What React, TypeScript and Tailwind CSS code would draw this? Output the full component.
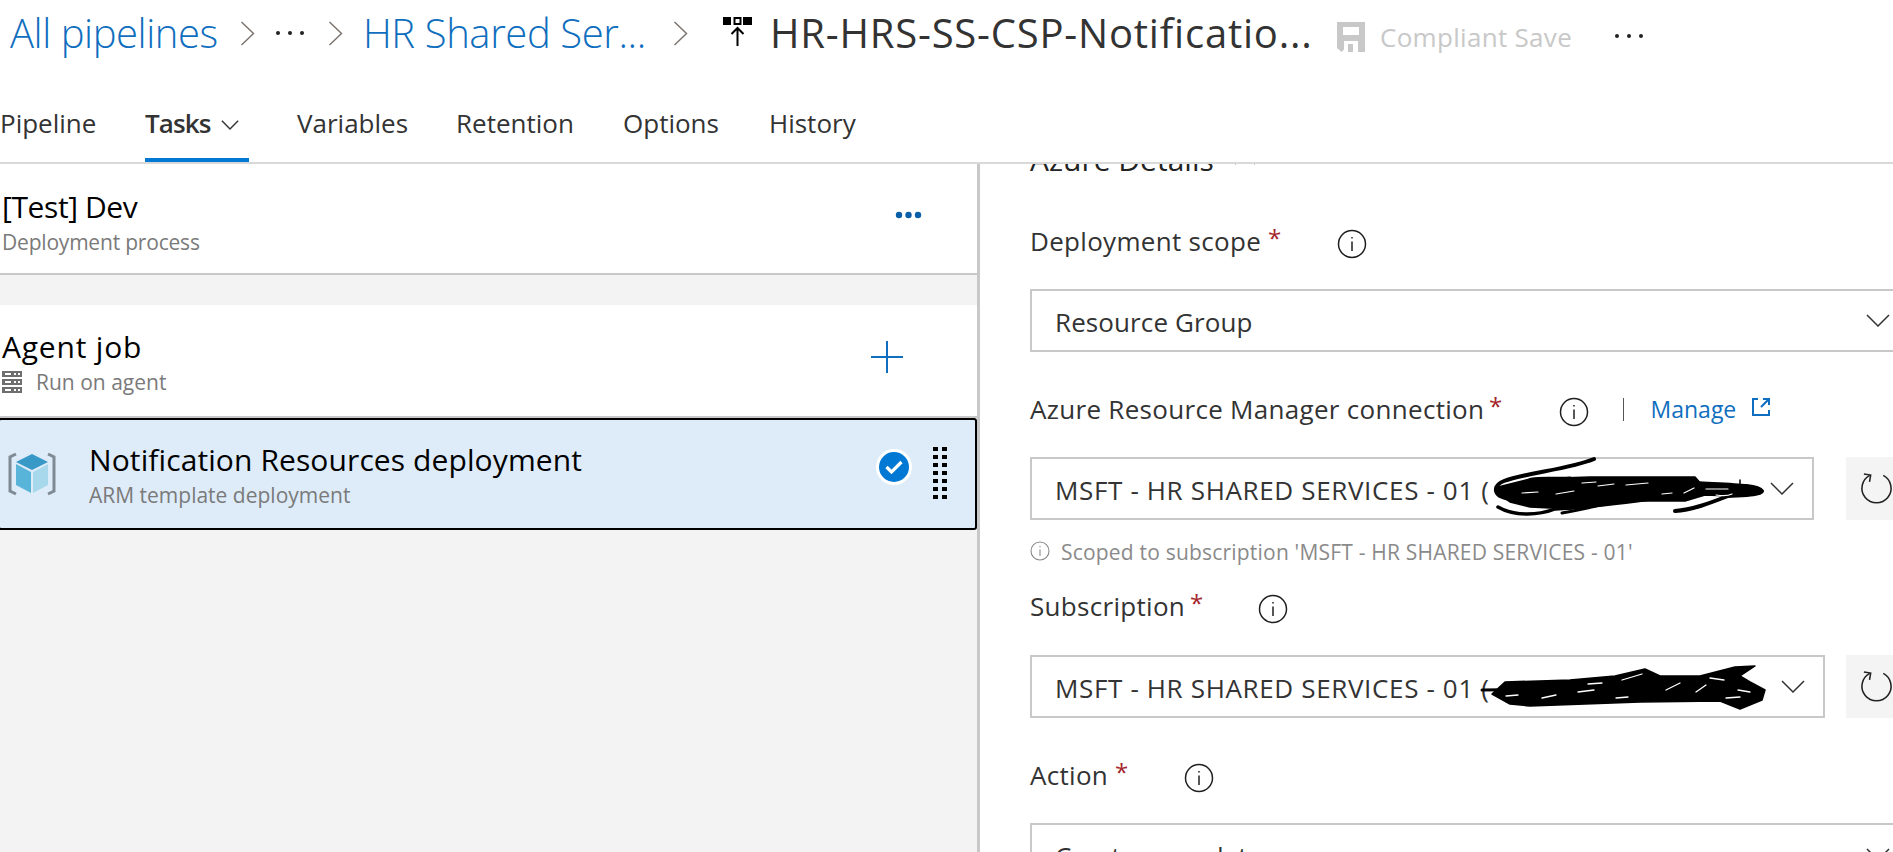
import React from "react";

const F = "font-['Open_Sans','Noto_Sans',sans-serif]";

function Info({ className = "" }: { className?: string }) {
  return (
    <svg viewBox="0 0 30 30" className={"w-[30px] h-[30px] shrink-0 " + className} fill="none" stroke="#1f1f1f" strokeWidth="1.5">
      <circle cx="15" cy="15" r="13.5" />
      <path d="M15 12.5V22" />
      <path d="M15 8v1.6" />
    </svg>
  );
}

function Chevron({ className = "" }: { className?: string }) {
  return (
    <svg viewBox="0 0 24 13" className={"w-[24px] h-[13px] shrink-0 " + className} fill="none" stroke="#333" strokeWidth="1.5">
      <path d="M1 1l11 11L23 1" />
    </svg>
  );
}

function Crumb({ className = "" }: { className?: string }) {
  return (
    <svg viewBox="0 0 15 25" className={"w-[15px] h-[25px] shrink-0 " + className} fill="none" stroke="#7d7671" strokeWidth="1.5">
      <path d="M1.5 1l12 11.5L1.5 24" />
    </svg>
  );
}

function Dots({ className = "" }: { className?: string }) {
  return (
    <svg viewBox="0 0 30 6" className={"w-[30px] h-[6px] shrink-0 " + className} fill="#222">
      <circle cx="3" cy="3" r="2" />
      <circle cx="15" cy="3" r="2" />
      <circle cx="27" cy="3" r="2" />
    </svg>
  );
}

function Refresh() {
  return (
    <div className="w-[47px] h-[63px] bg-[#f4f4f4] ml-auto shrink-0 flex items-center pl-[14px]">
      <svg viewBox="0 0 34 34" className="w-[33px] h-[33px] shrink-0" fill="none" stroke="#222" strokeWidth="1.6">
        <path d="M10 3.5A15 15 0 1 0 24 3.5" />
        <path d="M4 2l7 1.2-1.2 7" />
      </svg>
    </div>
  );
}

function Select({ text, width, tracking, children }: { text: string; width: string; tracking: string; children?: React.ReactNode }) {
  return (
    <div className={"relative h-[63px] border-2 border-[#c8c8c8] bg-white flex items-center pl-[23px] pr-[18px] shrink-0 " + width}>
      <span className={"text-[26px] text-[#333] whitespace-nowrap mt-[4px] " + tracking}>{text}</span>
      <Chevron className="ml-auto" />
      {children}
    </div>
  );
}

function Star({ className = "" }: { className?: string }) {
  return <span className={"text-[#a4262c] text-[24px] leading-none relative -top-[3px] " + className}>*</span>;
}

function Scribble1() {
  return (
    <svg viewBox="0 0 320 80" className="absolute left-[438px] top-[-10px] w-[320px] h-[80px] pointer-events-none" fill="none" stroke="#000" strokeLinecap="round" strokeLinejoin="round">
      <path strokeWidth="4" d="M124 10C100 20 55 24 34 32C24 36 24 43 30 47C44 54 70 50 100 44" />
      <path strokeWidth="3" d="M60 33C56 28 70 30 100 29" />
      <path strokeWidth="3.5" d="M28 58C45 68 70 66 85 60C120 58 150 54 180 50" />
      <path strokeWidth="4" d="M205 62C222 61 240 54 258 47C272 46 290 46 292 42C288 36 262 36 225 34" />
      <path strokeWidth="3" d="M92 64C115 60 130 56 150 52" />
      <path fill="#000" stroke="#000" strokeWidth="1.5" d="M28 38L60 30L120 28L225 28L232 36L262 37L290 40L290 45L262 47L235 46L215 52L150 52L100 60L60 58L40 53L28 45Z" />
      <path stroke="#fff" strokeWidth="1.2" d="M52 44l16-1M86 45l18-3M128 37l16-2M156 36l22-2M192 45l10-1M112 34l14-1M214 44l10-5M246 46c6 1 12 1 16-1M236 40l22 0" />
      <path strokeWidth="1.5" d="M240 34l2 4M270 31v6" />
    </svg>
  );
}

function Scribble2() {
  return (
    <svg viewBox="0 0 320 70" className="absolute left-[438px] top-[-3px] w-[320px] h-[70px] pointer-events-none" fill="none" stroke="#000" strokeLinecap="round" strokeLinejoin="round">
      <path strokeWidth="3" d="M12 36C60 36 90 34 120 32" />
      <path fill="#000" stroke="#000" strokeWidth="1.5" d="M22 40L35 28L100 26L145 22L175 15L190 22L230 22L265 13L285 12L270 22L280 28L295 36L292 46L270 55L250 47L170 48L60 52L40 50Z" />
      <path stroke="#fff" strokeWidth="1.3" d="M36 42l12-1M72 44l14-3M108 38l16-2M146 44l12-1M196 36l14-7M226 38l10-7M256 44l14-1M152 26l20-6M240 24l14 2M268 36l12 2M118 30l14-1" />
    </svg>
  );
}

export default function App() {
  return (
    <div className={"w-[1893px] h-[852px] overflow-hidden bg-white flex flex-col " + F}>
      {/* breadcrumb */}
      <div className="h-[66px] flex items-center shrink-0 pl-[10px]">
        <span className="text-[40px] font-light text-[#106ebe] tracking-[-0.45px] whitespace-nowrap w-[230px]">All pipelines</span>
        <Crumb />
        <Dots className="ml-[20px]" />
        <Crumb className="ml-[23px]" />
        <span className="text-[40px] font-light text-[#106ebe] tracking-[-0.4px] whitespace-nowrap ml-[20px] w-[310px]">HR Shared Ser...</span>
        <Crumb />
        <svg viewBox="0 0 30 30" className="w-[30px] h-[30px] ml-[35px] shrink-0 -mt-[3px]" fill="none">
          <rect x="0" y="0" width="8" height="8" fill="#000" />
          <rect x="11.5" y="1" width="6" height="6" stroke="#000" strokeWidth="2" />
          <rect x="20" y="0" width="9" height="8" fill="#000" />
          <path d="M14.5 29V12M8.5 17l6-6 6 6" stroke="#000" strokeWidth="2" />
        </svg>
        <span className="text-[40px] text-[#333] tracking-[0.8px] whitespace-nowrap ml-[17px] w-[567px]">HR-HRS-SS-CSP-Notificatio...</span>
        <svg viewBox="0 0 28 30" className="w-[28px] h-[30px] shrink-0 mt-[8px]" fill="#c8c8c8">
          <path fillRule="evenodd" d="M0 0h28v30h-7V19H7v8.5L4.5 30 0 26zM6 5v8h16V5z" />
          <path d="M11 22h5v8h-5z" />
        </svg>
        <span className="text-[26px] text-[#c8c8c8] tracking-[0.3px] whitespace-nowrap ml-[15px] mt-[8px] w-[234px]">Compliant Save</span>
        <Dots className="mt-[6px]" />
      </div>

      {/* tabs */}
      <div className="h-[98px] shrink-0 flex border-b-2 border-[#d9d9d9] text-[26px] text-[#333]">
        <div className="w-[145px] pt-[38px]">Pipeline</div>
        <div className="w-[152px] relative pt-[38px] font-semibold tracking-[-0.9px] flex items-start">
          <span>Tasks</span>
          <svg viewBox="0 0 16 9" className="w-[18px] h-[10px] ml-[11px] mt-[16px] shrink-0" fill="none" stroke="#333" strokeWidth="1.3">
            <path d="M.7.7L8 8 15.3.7" />
          </svg>
          <div className="absolute left-0 top-[92px] w-[104px] h-[4px] bg-[#0078d4]" />
        </div>
        <div className="w-[159px] pt-[38px]">Variables</div>
        <div className="w-[167px] pt-[38px]">Retention</div>
        <div className="w-[146px] pt-[38px]">Options</div>
        <div className="pt-[38px]">History</div>
      </div>

      <div className="flex-1 flex min-h-0">
        {/* left */}
        <div className="w-[980px] shrink-0 bg-[#f3f3f3] border-r-[3px] border-[#c8c8c8] flex flex-col">
          <div className="h-[111px] bg-white border-b-2 border-[#c8c8c8] flex items-center shrink-0 pr-[55px]">
            <div className="pl-[2px] pt-[7px] flex-1">
              <div className="text-[30px] leading-[40px] text-black tracking-[-0.4px]">[Test] Dev</div>
              <div className="text-[21px] leading-[30px] text-[#7a7a7a] tracking-[-0.2px]">Deployment process</div>
            </div>
            <svg viewBox="0 0 27 8" className="w-[27px] h-[8px] shrink-0 -mt-[7px]" fill="#0a5fa8">
              <circle cx="4" cy="4" r="3.2" />
              <circle cx="13.5" cy="4" r="3.2" />
              <circle cx="23" cy="4" r="3.2" />
            </svg>
          </div>
          <div className="h-[30px] shrink-0" />
          <div className="h-[113px] bg-white border-b-2 border-[#c8c8c8] flex items-center shrink-0 pr-[74px]">
            <div className="pl-[2px] pt-[3px] flex-1">
              <div className="text-[30px] leading-[40px] text-black tracking-[0.8px]">Agent job</div>
              <div className="flex items-center text-[21px] leading-[30px] text-[#7a7a7a]">
                <svg viewBox="0 0 20 22" className="w-[20px] h-[22px] shrink-0" fill="#6e6e6e">
                  <path fillRule="evenodd" d="M0 0h20v6H0zM3 2v2h6V2zM12 2v2h2V2zM16 2v2h2V2z" />
                  <path fillRule="evenodd" d="M0 8h20v6H0zM3 10v2h6v-2zM12 10v2h2v-2zM16 10v2h2v-2z" />
                  <path fillRule="evenodd" d="M0 16h20v6H0zM3 18v2h6v-2zM12 18v2h2v-2zM16 18v2h2v-2z" />
                </svg>
                <span className="ml-[14px]">Run on agent</span>
              </div>
            </div>
            <svg viewBox="0 0 32 32" className="w-[32px] h-[32px] shrink-0 -mt-[8px]" fill="none" stroke="#106ebe" strokeWidth="2">
              <path d="M16 0v32M0 16h32" />
            </svg>
          </div>
          <div className="h-[112px] bg-[#deecf9] border-2 border-black rounded-[3px] flex items-center shrink-0 relative -ml-[2px]">
            <svg viewBox="0 0 50 46" className="w-[50px] h-[46px] ml-[7px] shrink-0" fill="none">
              <path d="M9 3L3 6v34l6 3M41 3l6 3v34l-6 3" stroke="#7f8a94" strokeWidth="3" />
              <path d="M25 3l16 8-16 8-16-8z" fill="#3999c6" />
              <path d="M9 13l15 8v21l-15-8z" fill="#59b4d9" />
              <path d="M41 13l-15 8v21l15-8z" fill="#a8d8ec" />
            </svg>
            <div className="ml-[32px] pt-[2px] flex-1">
              <div className="text-[30px] leading-[40px] text-black tracking-[0.1px]">Notification Resources deployment</div>
              <div className="text-[21px] leading-[30px] text-[#7a7a7a]">ARM template deployment</div>
            </div>
            <div className="w-[36px] h-[36px] rounded-full bg-[#0078d4] border-[3px] border-white flex items-center justify-center shrink-0 mr-[21px] -mt-[14px]">
              <svg viewBox="0 0 18 14" className="w-[18px] h-[14px]" fill="none" stroke="#fff" strokeWidth="3.2">
                <path d="M1.5 7l5 5L16.5 2" />
              </svg>
            </div>
            <div className="grid grid-cols-2 gap-x-[4px] gap-y-[4px] w-[14px] shrink-0 mr-[28px] -mt-[2px]">
              {Array.from({ length: 14 }).map((_, i) => (
                <div key={i} className="w-[5px] h-[4px] bg-black" />
              ))}
            </div>
          </div>
        </div>

        {/* right */}
        <div className="flex-1 min-w-0 overflow-hidden pl-[50px] flex flex-col text-[#333]">
          <div className="flex items-center h-[40px] -mt-[25px] shrink-0 text-[30px] text-[#222] whitespace-nowrap">
            <span>Azure Details</span>
            <svg viewBox="0 0 24 13" className="w-[22px] h-[12px] ml-[20px] shrink-0" fill="none" stroke="#222" strokeWidth="1.5">
              <path d="M1 12L12 1l11 11" />
            </svg>
          </div>

          <div className="flex items-center h-[40px] mt-[42px] shrink-0 text-[26px] tracking-[0.3px] whitespace-nowrap">
            <span className="w-[238px]">Deployment scope</span>
            <Star />
            <Info className="ml-[55px] mt-[6px]" />
          </div>
          <Select text="Resource Group" tracking="tracking-[0.1px]" width="w-[880px] mt-[28px]" />

          <div className="flex items-center h-[40px] mt-[37px] shrink-0 text-[26px] tracking-[0.3px] whitespace-nowrap">
            <span className="w-[459px]">Azure Resource Manager connection</span>
            <Star />
            <Info className="ml-[56px] mt-[6px]" />
            <div className="w-[1px] h-[23px] bg-[#555] ml-[34px]" />
            <span className="text-[#106ebe] text-[23px] tracking-normal ml-[27px] w-[101px]">Manage</span>
            <svg viewBox="0 0 18 18" className="w-[18px] h-[18px] shrink-0 -mt-[4px]" fill="none" stroke="#106ebe" strokeWidth="2">
              <path d="M6 1H1v16h16v-5M9 9l8-8M11 1h6v6" />
            </svg>
          </div>
          <div className="flex mt-[28px] shrink-0">
            <Select text="MSFT - HR SHARED SERVICES - 01 (" tracking="tracking-[0.65px]" width="w-[784px]">
              <Scribble1 />
            </Select>
            <Refresh />
          </div>

          <div className="flex items-center h-[22px] mt-[22px] shrink-0 whitespace-nowrap">
            <svg viewBox="0 0 20 20" className="w-[20px] h-[20px] shrink-0 -mt-[4px]" fill="none" stroke="#8a8a8a" strokeWidth="1.1">
              <circle cx="10" cy="10" r="9" />
              <path d="M10 8.5V15M10 5v1.2" />
            </svg>
            <span className="ml-[11px] text-[21px] text-[#8a8a8a] tracking-[0.2px]">Scoped to subscription 'MSFT - HR SHARED SERVICES - 01'</span>
          </div>

          <div className="flex items-center h-[40px] mt-[22px] shrink-0 text-[26px] tracking-[0.3px] whitespace-nowrap">
            <span className="w-[160px]">Subscription</span>
            <Star />
            <Info className="ml-[54px] mt-[6px]" />
          </div>
          <div className="flex mt-[29px] shrink-0">
            <Select text="MSFT - HR SHARED SERVICES - 01 (" tracking="tracking-[0.65px]" width="w-[795px]">
              <Scribble2 />
            </Select>
            <Refresh />
          </div>

          <div className="flex items-center h-[40px] mt-[37px] shrink-0 text-[26px] tracking-[0.3px] whitespace-nowrap">
            <span className="w-[85px]">Action</span>
            <Star />
            <Info className="ml-[55px] mt-[6px]" />
          </div>
          <Select text="Create or update resource group" tracking="tracking-[0.1px]" width="w-[880px] mt-[28px]" />
        </div>
      </div>
    </div>
  );
}
